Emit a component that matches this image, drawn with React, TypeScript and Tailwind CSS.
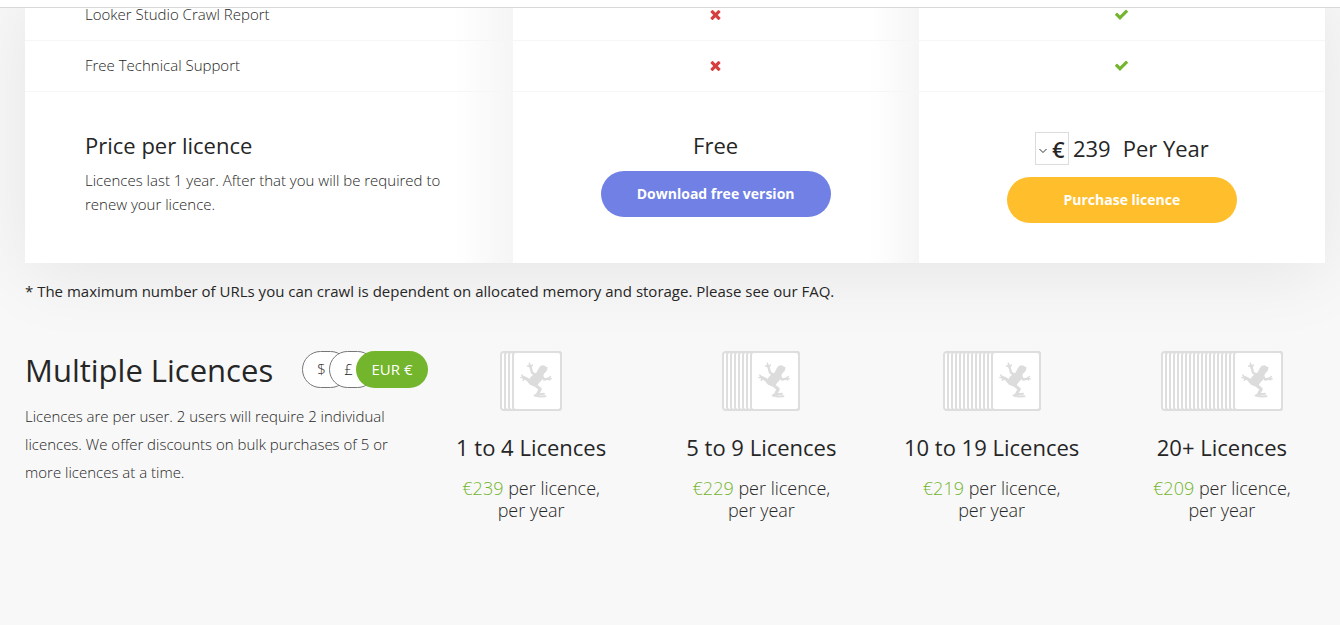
import { useState } from "react";

const FEATURES = ["Looker Studio Crawl Report", "Free Technical Support"];

const CURRENCIES = [
    { code: "USD", symbol: "$" },
    { code: "GBP", symbol: "£" },
    { code: "EUR", symbol: "€" },
];

const TIERS = [
    { label: "1 to 4 Licences", price: 239, stack: 3 },
    { label: "5 to 9 Licences", price: 229, stack: 7 },
    { label: "10 to 19 Licences", price: 219, stack: 12 },
    { label: "20+ Licences", price: 209, stack: 18 },
];

function CrossIcon() {
    return (
        <svg className="mx-auto" width="15" height="15" viewBox="0 0 1792 1792" fill="#d63f3f" role="img" aria-label="Not included">
            <path d="M1490 1322q0 40-28 68l-136 136q-28 28-68 28t-68-28l-294-294-294 294q-28 28-68 28t-68-28l-136-136q-28-28-28-68t28-68l294-294-294-294q-28-28-28-68t28-68l136-136q28-28 68-28t68 28l294 294 294-294q28-28 68-28t68 28l136 136q28 28 28 68t-28 68l-294 294 294 294q28 28 28 68z" />
        </svg>
    );
}

function TickIcon() {
    return (
        <svg className="mx-auto" width="15" height="15" viewBox="0 0 1792 1792" fill="#73b52d" role="img" aria-label="Included">
            <path d="M1671 566q0 40-28 68l-724 724-136 136q-28 28-68 28t-68-28l-136-136-362-362q-28-28-28-68t28-68l136-136q28-28 68-28t68 28l294 295 656-657q28-28 68-28t68 28l136 136q28 28 28 68z" />
        </svg>
    );
}

// Stack of licence cards, the front one carries the frog
function LicenceStack({ count }: { count: number }) {
    const width = 50 + count * 4;
    const offsets = Array.from({ length: count + 1 }, (_, i) => i * 4);

    return (
        <svg width={width} height="60" viewBox={`0 0 ${width} 60`} aria-hidden="true">
            {offsets.map((x) => (
                <rect
                    key={x}
                    x={x + 1}
                    y="1"
                    width={width - x - 2}
                    height="58"
                    rx="3"
                    fill="#fff"
                    stroke="#dedede"
                    strokeWidth="2"
                />
            ))}
            <g transform={`translate(${count * 4} 0)`} fill="none" stroke="#dcdcdc" strokeLinecap="round" strokeLinejoin="round">
                <path
                    d="M26.6 17.6 L28.6 14.8 L31.6 14.2 L35.6 16.6 L34.8 19.8 L31.8 23 L30.8 28 L27 32 L25 35.6 L20.4 35 L16 31 L18 27 L21.4 23.2 L24.6 21.4 Z"
                    fill="#dcdcdc"
                    stroke="none"
                />
                <path d="M23.4 24 L20 21.6 L18.8 17 L17.8 14.6" strokeWidth="2.4" />
                <path d="M17.8 15.4 L15.6 15 M17.8 15 L17.4 12.4 M18.6 16 L20.4 14" strokeWidth="1.6" />
                <path d="M30 25 L32.2 28.6 L36 27.6" strokeWidth="2.2" />
                <path d="M36 27.6 L38.4 25.4 M36 27.6 L39.2 27.8 M36 27.6 L37.6 29" strokeWidth="1.4" />
                <path d="M19 32.4 L15.6 28.4 L12 26.6" strokeWidth="3.2" />
                <path d="M11.8 26.4 L9.8 24 M11.8 26.4 L9 26.6 M12.8 27.4 L11.2 29.2" strokeWidth="1.5" />
                <path d="M21.6 32.8 L28.2 38 L26 42.4" strokeWidth="3.2" />
                <path d="M26 42.6 L22.6 44.6 L28 45.6 L33.4 45.2 M26.4 43.2 L32 42.8" strokeWidth="2" />
            </g>
        </svg>
    );
}

export default function App() {
    const [currency, setCurrency] = useState("EUR");
    const symbol = CURRENCIES.find((c) => c.code === currency)?.symbol;

    return (
        <div className="min-h-screen bg-[#f8f8f8] font-['Open_Sans','Noto_Sans',sans-serif] text-[#262626]">
            <header className="sticky top-0 z-10 h-2 border-b border-[#d9d9d9] bg-white" />

            <main className="-mt-[19px] pr-[15px] pb-24 pl-[25px]">
                {/* Plan comparison */}
                <table className="w-full table-fixed border-collapse bg-white shadow-[0_10px_70px_rgba(0,0,0,0.08)]">
                    <colgroup>
                        <col className="w-[37.5%]" />
                        <col />
                        <col />
                    </colgroup>
                    <tbody>
                        {FEATURES.map((feature) => (
                            <tr key={feature} className="h-[51px]">
                                <th
                                    scope="row"
                                    className="border-b border-[#f6f6f6] bg-gradient-to-r from-white from-88% to-[#f5f5f5] pl-[60px] text-left text-[15px] font-light"
                                >
                                    {feature}
                                </th>
                                <td className="border-b border-[#f6f6f6] bg-gradient-to-r from-white from-88% to-[#f5f5f5]">
                                    <CrossIcon />
                                </td>
                                <td className="border-b border-[#f6f6f6]">
                                    <TickIcon />
                                </td>
                            </tr>
                        ))}
                        <tr className="h-[172px] align-top">
                            <th
                                scope="row"
                                className="bg-gradient-to-r from-white from-88% to-[#f5f5f5] pt-[37px] pr-10 pl-[60px] text-left font-normal"
                            >
                                <h3 className="text-[22px] leading-8">Price per licence</h3>
                                <p className="mt-[7px] text-[15px] leading-6 font-light">
                                    Licences last 1 year. After that you will be required to renew your licence.
                                </p>
                            </th>
                            <td className="bg-gradient-to-r from-white from-88% to-[#f5f5f5] pt-[37px] text-center">
                                <p className="text-[22px] leading-8">Free</p>
                                <a
                                    href="#download"
                                    className="mx-auto mt-[10px] flex h-[46px] w-[230px] items-center justify-center rounded-full bg-[#7080e5] text-sm font-bold text-white"
                                >
                                    Download free version
                                </a>
                            </td>
                            <td className="pt-10 text-center">
                                <div className="flex items-center justify-center text-[22px] leading-8">
                                    <div className="relative mr-1">
                                        <select
                                            aria-label="Currency"
                                            value={currency}
                                            onChange={(e) => setCurrency(e.target.value)}
                                            className="block h-[33px] w-[34px] appearance-none border border-[#dcdcdc] bg-white pl-4 font-semibold"
                                        >
                                            {CURRENCIES.map((c) => (
                                                <option key={c.code} value={c.code}>
                                                    {c.symbol}
                                                </option>
                                            ))}
                                        </select>
                                        <svg
                                            className="pointer-events-none absolute top-4 left-1"
                                            width="8"
                                            height="6"
                                            viewBox="0 0 8 6"
                                            fill="none"
                                            stroke="#333"
                                            aria-hidden="true"
                                        >
                                            <path d="M0.5 1 L4 4.5 L7.5 1" />
                                        </svg>
                                    </div>
                                    <span>239</span>
                                    <span className="ml-3">Per Year</span>
                                </div>
                                <a
                                    href="#purchase"
                                    className="mx-auto mt-3 flex h-[46px] w-[230px] items-center justify-center rounded-full bg-[#ffbe2b] text-sm font-bold text-white"
                                >
                                    Purchase licence
                                </a>
                            </td>
                        </tr>
                    </tbody>
                </table>

                <p className="relative mt-4 text-[15px] leading-6">
                    * The maximum number of URLs you can crawl is dependent on allocated memory and storage. Please see our FAQ.
                </p>

                {/* Bulk pricing */}
                <section className="relative mt-12 grid grid-cols-[31%_1fr]">
                    <div>
                        <div className="flex items-center justify-between">
                            <h2 className="text-[31px] leading-9 whitespace-nowrap">Multiple Licences</h2>
                            <div className="flex">
                                {CURRENCIES.map((c) => (
                                    <button
                                        key={c.code}
                                        type="button"
                                        aria-pressed={currency === c.code}
                                        onClick={() => setCurrency(c.code)}
                                        className={
                                            currency === c.code
                                                ? "relative -ml-5 h-[37px] w-[72px] rounded-full bg-[#73b52d] text-[15px] whitespace-nowrap text-white first:ml-0"
                                                : "-ml-5 h-[37px] w-[47px] rounded-full border border-[#777] bg-white pr-2 text-[15px] font-light first:ml-0"
                                        }
                                    >
                                        {currency === c.code ? `${c.code} ${c.symbol}` : c.symbol}
                                    </button>
                                ))}
                            </div>
                        </div>
                        <p className="mt-[14px] max-w-[380px] text-[15px] leading-7 font-light">
                            Licences are per user. 2 users will require 2 individual licences. We offer discounts on bulk purchases of 5 or
                            more licences at a time.
                        </p>
                    </div>

                    <ul className="grid grid-cols-4 gap-6">
                        {TIERS.map((tier) => (
                            <li key={tier.label} className="flex flex-col items-center text-center">
                                <LicenceStack count={tier.stack} />
                                <h3 className="mt-5 text-[22px] leading-8 whitespace-nowrap">{tier.label}</h3>
                                <p className="mt-[14px] text-lg leading-[22px] font-light">
                                    <span className="text-[#73b52d]">
                                        {symbol}
                                        {tier.price}
                                    </span>{" "}
                                    per licence,
                                    <br />
                                    per year
                                </p>
                            </li>
                        ))}
                    </ul>
                </section>
            </main>
        </div>
    );
}
